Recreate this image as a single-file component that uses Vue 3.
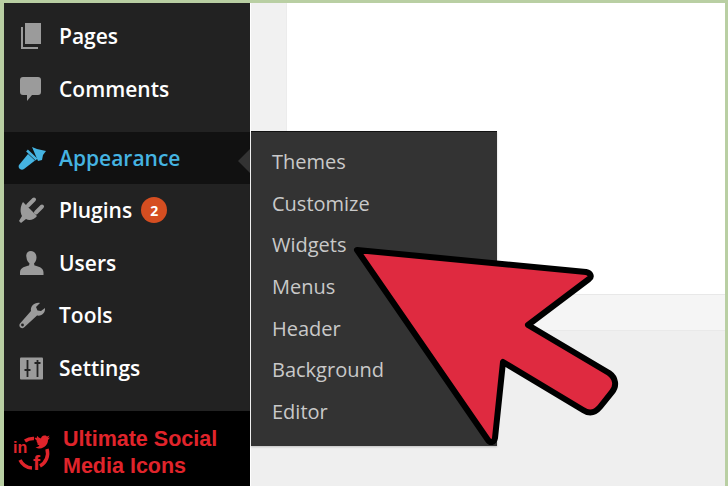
<template>
  <div class="screen">
    <aside class="sidebar">
      <ul class="menu">
        <li v-for="item in topItems" :key="item.label" class="row">
          <svg class="icon" viewBox="0 0 32 30" v-html="item.icon"></svg>
          <span>{{ item.label }}</span>
        </li>
        <li class="row active">
          <svg class="icon" viewBox="0 0 32 30">
            <path d="M18 4l5 2 9 2-3 4-1 5-4 1z" fill="#45b4e2" />
            <path d="M13 7.500l9.500 9" stroke="#45b4e2" stroke-width="2.500" />
            <path d="M14 11l7 6.500-11 8.500c-3 2-6.500-1-5-4z" fill="#45b4e2" />
          </svg>
          <span>Appearance</span>
        </li>
        <li v-for="item in bottomItems" :key="item.label" class="row">
          <svg class="icon" viewBox="0 0 32 30" v-html="item.icon"></svg>
          <span>{{ item.label }}</span>
          <b v-if="item.badge" class="badge">{{ item.badge }}</b>
        </li>
      </ul>
      <div class="plugin">
        <svg class="plugin-icon" viewBox="0 0 44 44">
          <path d="M15 9a14.500 14.500 0 0 1 9-2.500" fill="none" stroke="#e0242b" stroke-width="3.500" />
          <path d="M37 17a14.500 14.500 0 0 1-7 17M10 28a14.500 14.500 0 0 0 12 8" fill="none" stroke="#e0242b" stroke-width="3.500" />
          <path d="M29 9c-2 0-3.500-1-4.500-3 1-.5 2-.5 2.500 0-.5-1 0-2 .5-2 1 1.500 2 2 3.500 2.500 0-2 2-3.500 4-3 1 0 1.500 .5 2 1l2.500-1-1.500 2.500 2-.5-2 2.500c0 4.500-3.500 8-8 8.500-2 0-3-.5-4.500-1.500 2 0 3-.5 4-1.500-1.500-.5-2-1-2.500-2h1.500c-1.500-.5-2-2-2-3z" fill="#e0242b" />
          <text x="3" y="21" class="plugin-in">in</text>
          <text x="23" y="38" class="plugin-f">f</text>
        </svg>
        <span class="plugin-name">Ultimate Social Media Icons</span>
      </div>
    </aside>
    <main class="content">
      <section class="page">
        <div class="gutter"></div>
        <div class="panel"></div>
      </section>
      <div class="band"></div>
      <ul class="flyout">
        <li v-for="name in subItems" :key="name">{{ name }}</li>
      </ul>
    </main>
    <svg class="pointer" viewBox="0 0 728 486">
      <path
        d="M357 250 L586 272 C591 273 592 277 589 279 L528 325 L609 373 C616 378 617 386 612 392 L600 407 C595 413 589 414 583 410 L503 362 L495 438 C494 443 490 443 488 440 Z"
        fill="#df2a40"
        stroke="#000"
        stroke-width="6"
        stroke-linejoin="round"
      />
    </svg>
  </div>
</template>

<script setup>
const topItems = [
  {
    label: "Pages",
    icon: '<path d="M11 2h16v21H11z" fill="#9b9b9b"/><path d="M8 6v21h16" fill="none" stroke="#9b9b9b" stroke-width="2"/>',
  },
  {
    label: "Comments",
    icon: '<path d="M9 3h15c2 0 3 1 3 3v12c0 2-1 3-3 3h-6l-5 6v-6H9c-2 0-3-1-3-3V6c0-2 1-3 3-3z" fill="#9b9b9b"/>',
  },
];

const bottomItems = [
  {
    label: "Plugins",
    badge: 2,
    icon: '<path d="M14 10.500l6-6M22 17.500l6-6" stroke="#9b9b9b" stroke-width="4" stroke-linecap="round"/><path d="M9 7l14 14c-3 4-8 5-11 3l-5 4-2-2 3-5c-2-4-2-9 1-14z" fill="#9b9b9b"/>',
  },
  {
    label: "Users",
    icon: '<path d="M17 3c3.500 0 5.500 3 5.500 6.500 0 3-1.500 5-2.500 6l.5 2c3 1 9 1.500 9 7v2.500H6V24.500c0-5.500 6-6 9-7l.5-2c-1-1-3-3-3-6C11.500 6 13.500 3 17 3z" fill="#9b9b9b"/>',
  },
  {
    label: "Tools",
    icon: '<path d="M26 3L22 7l1.500 3.500L27 11l4-3c.5 4.500-3 8.500-8 7.500L10 27.500c-2.500 2-6-1-4-4L17 11C16 6.500 20.500 2 26 3z" fill="#9b9b9b"/><circle cx="8.500" cy="25" r="1.400" fill="#222"/>',
  },
  {
    label: "Settings",
    icon: '<rect x="6" y="4.500" width="23" height="22" rx="1" fill="#9b9b9b"/><path d="M13.500 7v17M23.500 7v17M10.500 17h6M20.500 10h6" stroke="#222" stroke-width="1.800"/>',
  },
];

const subItems = ["Themes", "Customize", "Widgets", "Menus", "Header", "Background", "Editor"];
</script>

<style>
html,
body {
  margin: 0;
  background: #fff;
}
</style>

<style scoped>
.screen {
  position: relative;
  box-sizing: border-box;
  width: 728px;
  height: 486px;
  display: flex;
  overflow: hidden;
  padding: 3px 3px 0 4px;
  background: #b9cfa3;
  font-family: "Open Sans", "Liberation Sans", sans-serif;
}
.sidebar {
  width: 246px;
  flex: none;
  display: flex;
  flex-direction: column;
  background: #222222;
}
.menu {
  margin: 0;
  padding: 7px 0 0;
  list-style: none;
  flex: 1;
}
.row {
  height: 52.4px;
  display: flex;
  align-items: center;
  color: #fff;
  font-size: 21px;
  font-weight: 600;
}
.row span {
  margin-left: 13px;
}
.icon {
  width: 32px;
  height: 30px;
  margin-left: 10px;
  flex: none;
}
.active {
  margin-top: 17px;
  background: #111111;
  color: #45b4e2;
  position: relative;
}
.active::after {
  content: "";
  position: absolute;
  right: 0;
  top: 17px;
  border: 12px solid transparent;
  border-left: 0;
  border-right-color: #333333;
}
.badge {
  width: 26px;
  height: 26px;
  margin-left: 9px;
  border-radius: 50%;
  background: #d54e21;
  color: #fff;
  font-size: 14px;
  font-weight: 700;
  display: flex;
  align-items: center;
  justify-content: center;
}
.plugin {
  height: 75px;
  flex: none;
  display: flex;
  align-items: center;
  gap: 9px;
  padding-left: 6px;
  background: #000;
}
.plugin-icon {
  width: 44px;
  height: 44px;
  margin-top: 11px;
  flex: none;
}
.plugin-in,
.plugin-f {
  fill: #e0242b;
  font-family: "Liberation Sans", sans-serif;
  font-weight: 700;
  font-size: 16px;
}
.plugin-f {
  font-size: 21px;
}
.plugin-name {
  width: 170px;
  margin-top: 9px;
  color: #e0242b;
  font-family: "Liberation Sans", sans-serif;
  font-size: 21.5px;
  font-weight: 700;
  line-height: 27px;
}
.content {
  flex: 1;
  position: relative;
  display: flex;
  flex-direction: column;
  background: #efefef;
  border-left: 1px solid #fff;
}
.page {
  height: 292px;
  flex: none;
  display: flex;
}
.gutter {
  width: 35px;
  background: #f1f1f1;
}
.panel {
  flex: 1;
  background: #fff;
  border-left: 1px solid #ececec;
  border-bottom: 1px solid #e8e8e8;
}
.band {
  height: 35px;
  background: #f5f5f5;
  border-bottom: 1px solid #e9e9e9;
}
.flyout {
  position: absolute;
  left: 0;
  top: 128px;
  box-sizing: border-box;
  width: 246px;
  height: 315px;
  margin: 0;
  padding: 9px 0 0 21px;
  list-style: none;
  background: #333333;
  border-top: 1px solid #111;
  box-shadow: 0 1px 2px rgba(0, 0, 0, 0.2);
  color: #c9c9c9;
  font-size: 20px;
}
.flyout li {
  height: 41.7px;
  line-height: 41.7px;
}
.pointer {
  position: absolute;
  left: 0;
  top: 0;
  width: 728px;
  height: 486px;
}
</style>
